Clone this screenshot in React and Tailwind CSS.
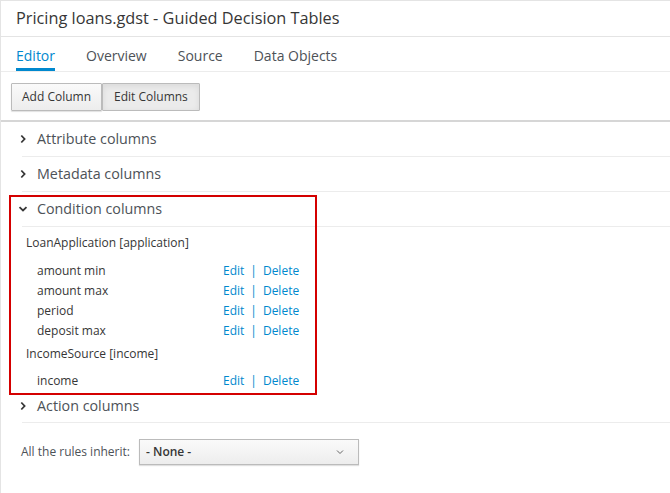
import React from "react";

const font = { fontFamily: '"Open Sans", "Liberation Sans", sans-serif' };

function Chevron({ open }) {
  return (
    <svg width="10" height="10" viewBox="0 0 10 10" className="shrink-0">
      {open ? (
        <path d="M1.5 3.2 L5 6.5 L8.5 3.2" fill="none" stroke="#363636" strokeWidth="1.8" />
      ) : (
        <path d="M3.3 1.5 L6.6 5 L3.3 8.5" fill="none" stroke="#363636" strokeWidth="1.8" />
      )}
    </svg>
  );
}

function Header({ label, open, extra = "" }) {
  return (
    <div className={"flex h-[35px] items-center border-b border-[#ececec] " + extra}>
      <div className="ml-[-4px] flex w-[19px] justify-start">
        <Chevron open={open} />
      </div>
      <span className="text-[14.3px] text-[#4d5258]">{label}</span>
    </div>
  );
}

function Row({ name }) {
  return (
    <div className="flex h-[20px] items-center text-[12px]">
      <span className="w-[201px] pl-[15px] text-[#363636]">{name}</span>
      <span className="text-[#0088ce]">Edit</span>
      <span className="px-[6px] text-[#0088ce]">|</span>
      <span className="text-[#0088ce]">Delete</span>
    </div>
  );
}

export default function App() {
  return (
    <div
      style={font}
      className="relative h-[493px] w-[670px] overflow-hidden border-l border-t border-[#e4e4e4] bg-white"
    >
      <div className="flex h-[36px] items-center border-b border-[#e4e4e4] px-[15px] text-[16.3px] text-[#363636]">
        Pricing loans.gdst - Guided Decision Tables
      </div>
      <div className="flex h-[35px] items-stretch border-b border-[#ececec] px-[15px] text-[14px]">
        <div className="flex items-center border-b-[3px] border-[#0088ce] pt-[6px] text-[#0088ce]">Editor</div>
        <div className="ml-[31px] flex items-center pt-[3px] text-[#4d5258]">Overview</div>
        <div className="ml-[31px] flex items-center pt-[3px] text-[#4d5258]">Source</div>
        <div className="ml-[31px] flex items-center pt-[3px] text-[#4d5258]">Data Objects</div>
      </div>
      <div className="flex h-[50px] items-center border-b-2 border-[#d6d6d6] px-[10px] pt-[1px]">
        <button className="h-[28px] rounded-[1px] border border-[#bbb] bg-gradient-to-b from-[#fafafa] to-[#ededed] px-[10px] text-[12px] text-[#363636] shadow-[0_1px_1px_rgba(0,0,0,0.12)]">
          Add Column
        </button>
        <button className="h-[28px] rounded-[1px] border border-[#bbb] bg-[#ebebeb] px-[11px] text-[12px] text-[#363636] shadow-[inset_0_2px_6px_rgba(0,0,0,0.08)]">
          Edit Columns
        </button>
      </div>
      <div className="pl-[21px]">
        <Header label="Attribute columns" />
        <Header label="Metadata columns" />
        <Header label="Condition columns" open />
        <div className="pt-[6px]">
          <div className="h-[20px] pl-[4px] text-[12px] leading-[20px] text-[#363636]">LoanApplication [application]</div>
          <div className="h-[8px]" />
          <Row name="amount min" />
          <Row name="amount max" />
          <Row name="period" />
          <Row name="deposit max" />
          <div className="h-[26px] pl-[4px] pt-[3px] text-[12px] leading-[20px] text-[#363636]">IncomeSource [income]</div>
          <div className="h-[4px]" />
          <Row name="income" />
        </div>
        <Header label="Action columns" extra="mt-[-3px] h-[34px] pt-[1px]" />
        <div className="flex items-center pt-[16px]">
          <span className="ml-[-1px] w-[118px] text-[12px] text-[#4d5258]">All the rules inherit:</span>
          <div className="flex h-[26px] w-[220px] items-center justify-between border border-[#bbb] bg-gradient-to-b from-[#fafafa] to-[#ededed] pl-[6px] pr-[14px] text-[12px] font-semibold text-[#363636] shadow-[0_1px_1px_rgba(0,0,0,0.12)]">
            <span>- None -</span>
            <svg width="8" height="6" viewBox="0 0 8 6">
              <path d="M1 1.5 L4 4.5 L7 1.5" fill="none" stroke="#666" strokeWidth="1" />
            </svg>
          </div>
        </div>
      </div>
      <div className="pointer-events-none absolute left-[8px] top-[194px] h-[200px] w-[308px] border-2 border-[#d40000]" />
    </div>
  );
}
